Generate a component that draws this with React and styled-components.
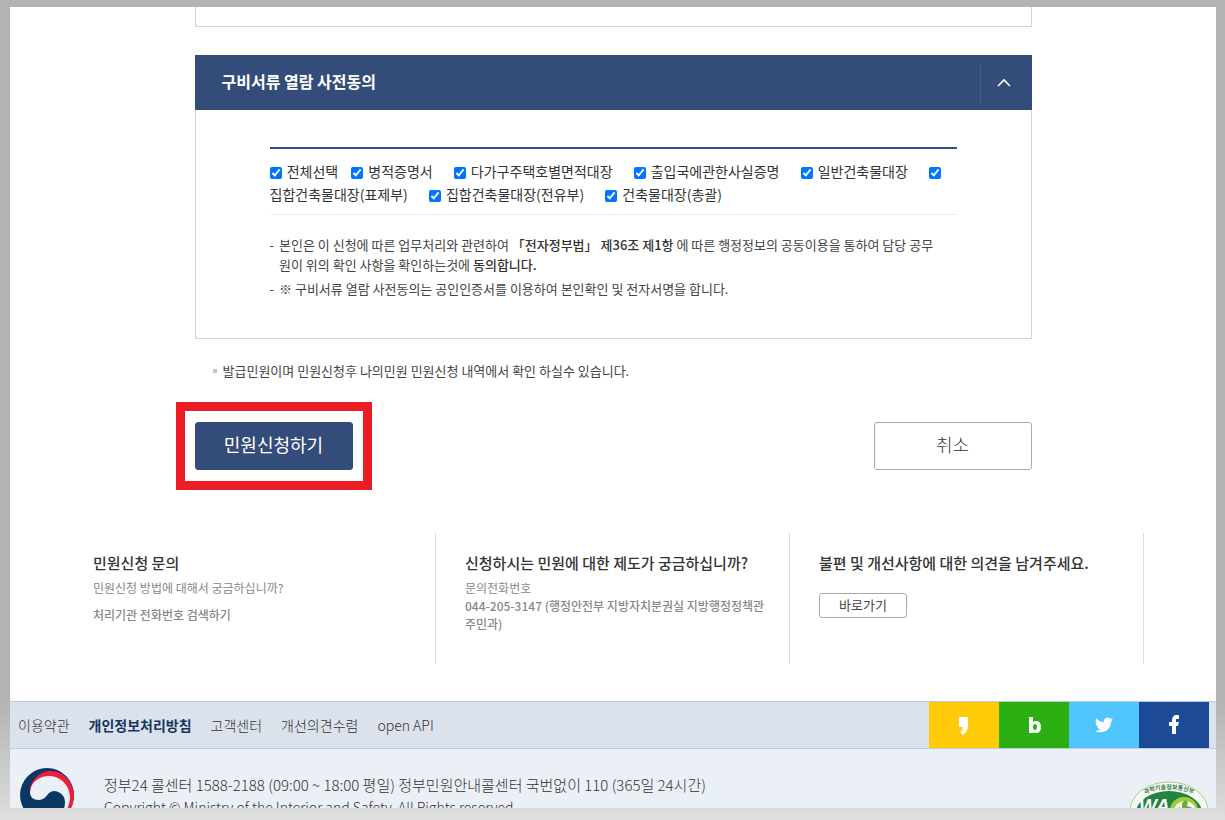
import React, { useState } from "react";
import styled, { createGlobalStyle, css } from "styled-components";

const GlobalStyle = createGlobalStyle`
  * { box-sizing: border-box; }
  body {
    margin: 0;
    color: #333;
    font-family: "Noto Sans CJK KR", "Noto Sans", sans-serif;
    font-size: 13px;
    line-height: 20px;
    word-break: keep-all;
  }
  button { font-family: inherit; cursor: pointer; }
  a { color: inherit; text-decoration: none; }
  h2, h3, p, ul { margin: 0; padding: 0; }
  ul { list-style: none; }
`;

const Backdrop = styled.div`
  height: 100vh;
  padding: 7px 9px 12px 10px;
  background: linear-gradient(#b3b5b4 0%, #b3b5b4 86%, #d8d8d8 98%, #dedede 100%);
`;

const Sheet = styled.div`
  height: 100%;
  overflow: hidden;
  background: #fff;
`;

const Content = styled.main`
  max-width: 837px;
  margin: 0 auto;
`;

const PreviousPanel = styled.div`
  height: 20px;
  border: 1px solid #d3d3d3;
  border-top: 0;
`;

const Panel = styled.section`
  margin-top: 28px;
`;

const PanelHeader = styled.div`
  display: flex;
  align-items: center;
  height: 55px;
  padding-left: 27px;
  background: #334c79;
  color: #fff;
`;

const PanelTitle = styled.h2`
  flex: 1;
  padding-bottom: 4px;
  font-size: 16px;
  font-weight: 700;
  line-height: 24px;
`;

const ToggleButton = styled.button`
  display: flex;
  align-items: center;
  justify-content: center;
  width: 52px;
  height: 39px;
  padding: 0 4px 0 0;
  border: 0;
  border-left: 1px solid #475f8b;
  background: none;
  color: #fff;
`;

const PanelBody = styled.div`
  padding: 37px 74px 35px;
  border: 1px solid #d3d3d3;
  border-top: 0;
`;

const DocumentList = styled.div`
  padding: 11px 0 8px;
  border-top: 2px solid #334c89;
  border-bottom: 1px solid #ededed;
  font-size: 14px;
  font-weight: 400;
  line-height: 23px;
`;

const DocumentLabel = styled.label`
  margin-right: ${({ $gap }) => $gap}px;
`;

const Checkbox = styled.input`
  width: 12px;
  height: 12px;
  margin: 0 2px 0 0;
  vertical-align: -2px;
  accent-color: #0075ff;
`;

const Terms = styled.ul`
  padding-top: 20px;
  color: #444;
  font-size: 13px;
  font-weight: 400;
  line-height: 20px;
`;

const Term = styled.li`
  display: flex;
  gap: 5px;
  padding-right: 12px;
  margin-bottom: 4px;

  &::before { content: "-"; }
  strong { color: #333; font-weight: 500; }
`;

const Notice = styled.p`
  display: flex;
  align-items: center;
  gap: 6px;
  margin: 22px 0 0 18px;
  color: #444;
  font-weight: 400;

  &::before {
    content: "";
    width: 4px;
    height: 4px;
    background: #c4c4c4;
  }
`;

const Actions = styled.div`
  display: flex;
  align-items: center;
  justify-content: space-between;
  margin: 21px 0 43px -19px;
`;

const Highlight = styled.div`
  padding: 11px 10px;
  border: 9px solid #ec1c24;
`;

const ActionButton = styled.button`
  display: block;
  width: 158px;
  height: 48px;
  padding: 0 0 4px;
  border: 1px solid #aaa;
  border-radius: 3px;
  background: #fff;
  color: #333;
  font-size: 18px;
  font-weight: 300;

  ${({ $primary }) => $primary && css`
    border-color: #334c79;
    background: #334c79;
    color: #fff;
    font-weight: 400;
  `}
`;

const HelpGrid = styled.section`
  display: grid;
  grid-template-columns: repeat(3, 1fr);
  max-width: 1062px;
  margin: 0 auto 37px;
`;

const HelpCard = styled.div`
  min-height: 131px;
  padding: 19px 16px 0 29px;
  border-right: 1px solid #dcdcdc;
  color: #888;
  font-size: 12px;
  line-height: 18px;

  &:first-child { padding-left: 11px; }
`;

const HelpTitle = styled.h3`
  margin-bottom: 5px;
  color: #333;
  font-size: 15px;
  font-weight: 500;
  line-height: 22px;
`;

const HelpText = styled.p`
  font-weight: ${({ $strong }) => ($strong ? 500 : 400)};
`;

const HelpLink = styled.a`
  display: block;
  margin-top: 9px;
  font-weight: 500;
`;

const SmallButton = styled.button`
  width: 88px;
  height: 25px;
  margin-top: 14px;
  padding: 0 0 2px;
  border: 1px solid #aaa;
  border-radius: 3px;
  background: #fff;
  color: #444;
  font-size: 13px;
  font-weight: 400;
  line-height: 20px;
`;

const FooterBar = styled.div`
  display: flex;
  justify-content: space-between;
  height: 48px;
  padding: 0 7px 0 8px;
  border-top: 1px solid #bccbe0;
  border-bottom: 1px solid #bccbe0;
  background: #dce2ec;
`;

const FooterNav = styled.nav`
  display: flex;
  align-items: center;
  gap: 19px;
  font-size: 14px;
  font-weight: 300;
`;

const FooterLink = styled.a`
  ${({ $strong }) => $strong && css`
    color: #17375e;
    font-weight: 700;
  `}
`;

const SocialList = styled.div`
  display: flex;
`;

const SocialLink = styled.a`
  display: flex;
  align-items: center;
  justify-content: center;
  width: 70px;
  background: ${({ $color }) => $color};
`;

const FooterBody = styled.footer`
  display: flex;
  align-items: flex-start;
  height: 160px;
  padding: 19px 7px 0 10px;
  background: #ebf0f7;
`;

const FooterText = styled.div`
  flex: 1;
  padding: 5px 0 0 30px;
  font-size: 15px;
  font-weight: 300;
  line-height: 23px;
`;

const Copyright = styled.p`
  font-size: 14px;
`;

const MarkSlot = styled.div`
  padding-top: 13px;
`;

const documents = [
  ["전체선택", 13],
  ["병적증명서", 21],
  ["다가구주택호별면적대장", 21],
  ["출입국에관한사실증명", 21],
  ["일반건축물대장", 21],
  ["집합건축물대장(표제부)", 21],
  ["집합건축물대장(전유부)", 21],
  ["건축물대장(총괄)", 0],
];

const Emblem = () => (
  <svg width="54" height="54" viewBox="0 0 54 54" role="img" aria-label="대한민국정부">
    <circle cx="27" cy="27" r="27" fill="#0b3765" />
    <path d="M9 24C11 11 20 3 31 3C43 3 54 14 54 28C54 41 45 51 34 54C44 48 48 40 48 30C47 17 38 10 29 10C20 10 12 15 9 24Z" fill="#f31b3b" />
    <path d="M10 24C11 13 20 8 29 8C41 8 50 18 50 29C50 40 43 49 34 53C41 48 45 42 45 34C45 27 39 23 34 23C27 23 27 32 19 32C13 32 10 29 10 24Z" fill="#ebf0f7" />
  </svg>
);

const WebMark = () => (
  <svg width="80" height="60" viewBox="0 0 80 60" role="img" aria-label="과학기술정보통신부 WA">
    <defs>
      <path id="mark-arc" d="M8 17Q40 -1 72 17" />
    </defs>
    <ellipse cx="40" cy="30" rx="39" ry="29" fill="#f5f9f3" stroke="#a9cf8b" />
    <ellipse cx="40" cy="32" rx="33" ry="22" fill="#238442" />
    <ellipse cx="55" cy="29" rx="14" ry="13" fill="#a2cc3a" />
    <ellipse cx="56" cy="30" rx="11" ry="10" fill="#f5f9f3" />
    <path d="M46 33L50 26L53 28L53 22L56 19L59 21L58 25L64 27L61 29L63 34L57 32L54 36L51 31Z" fill="#6fae35" />
    <text fill="#2d7a43" fontSize="6" fontWeight="700">
      <textPath href="#mark-arc" startOffset="50%" textAnchor="middle">과학기술정보통신부</textPath>
    </text>
    <text x="10" y="31" fill="#fff" fontFamily="Liberation Sans, sans-serif" fontSize="19" fontStyle="italic" fontWeight="700">WA</text>
  </svg>
);

const socials = [
  ["카카오스토리", "#ffca08", <path d="M10 7h9v8c0 5-2 8-5 10l-3-3c2-1 3-3 3-5h-4z" />],
  ["네이버 블로그", "#2bae12", <path fillRule="evenodd" d="M10 7h4v5c1-1 2-1 3-1 3 0 5 2 5 6s-2 6-5 6c-1 0-2 0-3-1v1h-4zM16 14c-1 0-2 1-2 3s1 3 2 3 2-1 2-3-1-3-2-3z" />],
  ["트위터", "#50c5fc", <path transform="translate(6 6) scale(.75)" d="M23.95 4.57a10 10 0 0 1-2.82.77 4.96 4.96 0 0 0 2.16-2.72 9.9 9.9 0 0 1-3.12 1.19 4.92 4.92 0 0 0-8.38 4.48A13.93 13.93 0 0 1 1.64 3.16a4.92 4.92 0 0 0 1.52 6.57 4.9 4.9 0 0 1-2.23-.61v.06a4.92 4.92 0 0 0 3.95 4.83 4.95 4.95 0 0 1-2.21.08 4.94 4.94 0 0 0 4.6 3.42A9.87 9.87 0 0 1 0 19.54a13.94 13.94 0 0 0 7.55 2.21c9.05 0 14-7.5 14-13.98 0-.21 0-.42-.02-.63a9.94 9.94 0 0 0 2.46-2.55z" />],
  ["페이스북", "#1c4a97", <path d="M13 24v-8h-3v-4h3V10c0-3 2-5 4-5h3v4h-2c-1 0-1 0-1 1v2h3l-1 4h-2v8z" />],
];

export default function App() {
  const [open, setOpen] = useState(true);
  return (
    <>
      <GlobalStyle />
      <Backdrop>
        <Sheet>
          <Content>
            <PreviousPanel />
            <Panel>
              <PanelHeader>
                <PanelTitle>구비서류 열람 사전동의</PanelTitle>
                <ToggleButton type="button" aria-label="접기" aria-expanded={open} onClick={() => setOpen(!open)}>
                  <svg width="14" height="9" viewBox="0 0 14 9" fill="none" stroke="currentColor" strokeWidth="1.6">
                    <path d="M1 8L7 2L13 8" />
                  </svg>
                </ToggleButton>
              </PanelHeader>
              {open && (
                <PanelBody>
                  <DocumentList>
                    {documents.map(([name, gap]) => (
                      <React.Fragment key={name}>
                        <DocumentLabel $gap={gap}>
                          <Checkbox type="checkbox" defaultChecked /> {name}
                        </DocumentLabel>
                        <wbr />
                      </React.Fragment>
                    ))}
                  </DocumentList>
                  <Terms>
                    <Term>
                      <span>
                        본인은 이 신청에 따른 업무처리와 관련하여 <strong>「전자정부법」 제36조 제1항</strong> 에 따른 행정정보의 공동이용을 통하여 담당 공무<wbr />원이 위의 확인 사항을 확인하는것에 <strong>동의합니다.</strong>
                      </span>
                    </Term>
                    <Term>
                      <span>※ 구비서류 열람 사전동의는 공인인증서를 이용하여 본인확인 및 전자서명을 합니다.</span>
                    </Term>
                  </Terms>
                </PanelBody>
              )}
            </Panel>
            <Notice>발급민원이며 민원신청후 나의민원 민원신청 내역에서 확인 하실수 있습니다.</Notice>
            <Actions>
              <Highlight>
                <ActionButton type="submit" $primary>민원신청하기</ActionButton>
              </Highlight>
              <ActionButton type="button">취소</ActionButton>
            </Actions>
          </Content>
          <HelpGrid>
            <HelpCard>
              <HelpTitle>민원신청 문의</HelpTitle>
              <HelpText>민원신청 방법에 대해서 궁금하십니까?</HelpText>
              <HelpLink href="#contacts">처리기관 전화번호 검색하기</HelpLink>
            </HelpCard>
            <HelpCard>
              <HelpTitle>신청하시는 민원에 대한 제도가 궁금하십니까?</HelpTitle>
              <HelpText>문의전화번호</HelpText>
              <HelpText $strong>044-205-3147 (행정안전부 지방자치분권실 지방행정정책관 주민과)</HelpText>
            </HelpCard>
            <HelpCard>
              <HelpTitle>불편 및 개선사항에 대한 의견을 남겨주세요.</HelpTitle>
              <SmallButton type="button">바로가기</SmallButton>
            </HelpCard>
          </HelpGrid>
          <FooterBar>
            <FooterNav>
              <FooterLink href="#terms">이용약관</FooterLink>
              <FooterLink href="#privacy" $strong>개인정보처리방침</FooterLink>
              <FooterLink href="#support">고객센터</FooterLink>
              <FooterLink href="#feedback">개선의견수렴</FooterLink>
              <FooterLink href="#api">open API</FooterLink>
            </FooterNav>
            <SocialList>
              {socials.map(([name, color, shape]) => (
                <SocialLink key={name} href="#social" aria-label={name} $color={color}>
                  <svg width="30" height="30" viewBox="0 0 30 30" fill="#fff">{shape}</svg>
                </SocialLink>
              ))}
            </SocialList>
          </FooterBar>
          <FooterBody>
            <Emblem />
            <FooterText>
              <p>정부24 콜센터 1588-2188 (09:00 ~ 18:00 평일) 정부민원안내콜센터 국번없이 110 (365일 24시간)</p>
              <Copyright>Copyright © Ministry of the Interior and Safety. All Rights reserved.</Copyright>
            </FooterText>
            <MarkSlot><WebMark /></MarkSlot>
          </FooterBody>
        </Sheet>
      </Backdrop>
    </>
  );
}
